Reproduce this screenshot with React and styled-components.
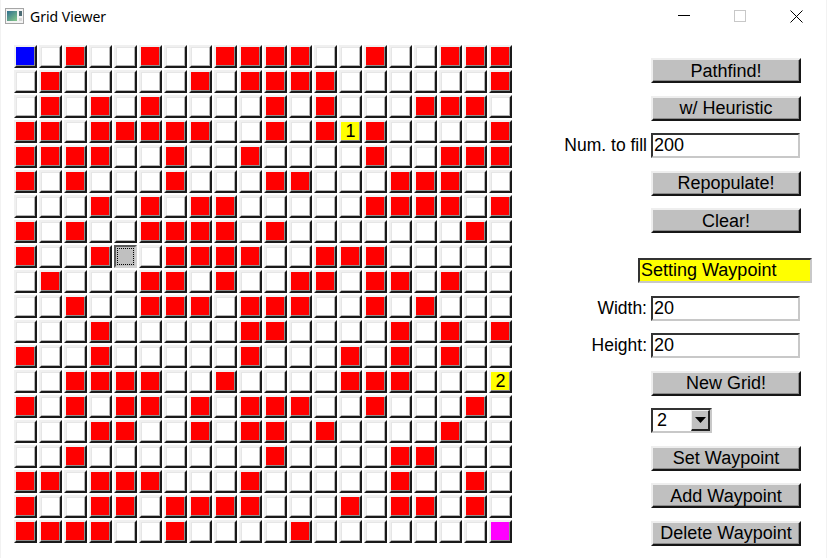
import React from "react";
import styled, { createGlobalStyle, css } from "styled-components";

const Global = createGlobalStyle`
  html, body { margin: 0; padding: 0; background: #fff; }
  body { width: 827px; height: 558px; overflow: hidden; }
`;

const Window = styled.div`
  box-sizing: border-box;
  width: 827px;
  height: 558px;
  background: #fff;
  border-left: 1px solid #f2f2f2;
  border-right: 1px solid #f2f2f2;
  display: flex;
  flex-direction: column;
  font-family: "Liberation Sans", Arial, sans-serif;
  color: #000;
`;

const TitleBar = styled.header`
  height: 45px;
  flex: none;
  display: flex;
  align-items: flex-start;
  padding: 8px 0 0 4px;
  box-sizing: border-box;
`;

const TitleText = styled.span`
  font-family: "Noto Sans", "Open Sans", sans-serif;
  font-size: 14px;
  line-height: 18px;
  margin-left: 6px;
  flex: 1;
`;

const WindowButtons = styled.div`
  display: flex;
  padding-right: 23px;
  gap: 44px;
  margin-top: 2px;
`;

const Body = styled.main`
  display: flex;
  align-items: flex-start;
`;

const Grid = styled.div`
  display: grid;
  grid-template-columns: repeat(20, 23px);
  grid-auto-rows: 23px;
  gap: 2px;
  margin-left: 13px;
`;

const fills = { R: "#ff0000", B: "#0000ff", M: "#ff00ff", Y: "#ffff00", ".": "#ffffff", G: "#c0c0c0" };

const Cell = styled.div`
  box-sizing: border-box;
  width: 23px;
  height: 23px;
  background: ${(p) => fills[p.$kind]};
  border-style: solid;
  border-width: 2px;
  font-size: 18px;
  line-height: 19px;
  text-align: center;
  ${(p) =>
    p.$kind === "G"
      ? css`
          border-color: #5a5a5a #d0d0d0 #d0d0d0 #5a5a5a;
          outline: 1px dotted #000;
          outline-offset: -4px;
        `
      : css`
          border-color: #f0f0f0 #1a1a1a #1a1a1a #f0f0f0;
          box-shadow: inset -1px -1px 0 ${p.$kind === "." ? "#b4b4b4" : "#8c8c8c"}
            ${p.$kind === "." ? ", inset 1px 1px 0 #e6e6e6" : ""};
        `}
`;

const Panel = styled.aside`
  display: flex;
  flex-direction: column;
  gap: 25px;
  margin-left: 51px;
  margin-top: 13px;
`;

const Section = styled.section`
  display: grid;
  grid-template-columns: 84px 150px;
  column-gap: 4px;
  row-gap: 12.5px;
  grid-auto-rows: 25px;
  font-size: 17.5px;
  align-items: center;
`;

const Button = styled.button`
  grid-column: 2;
  box-sizing: border-box;
  width: 150px;
  height: 25px;
  padding: 0;
  background: #c0c0c0;
  border-style: solid;
  border-width: 2px;
  border-color: #eeeeee #161616 #161616 #eeeeee;
  box-shadow: inset -1px -1px 0 #8a8a8a;
  border-radius: 0;
  font: 18px/20px "Liberation Sans", Arial, sans-serif;
  color: #000;
  white-space: nowrap;
`;

const Label = styled.label`
  grid-column: 1;
  justify-self: end;
  white-space: nowrap;
  line-height: 25px;
`;

const Field = styled.input`
  grid-column: 2;
  box-sizing: border-box;
  width: 149px;
  height: 25px;
  padding: 0 0 0 1px;
  background: #fff;
  border-style: solid;
  border-width: 2px;
  border-color: #333 #c8c8c8 #c8c8c8 #333;
  border-radius: 0;
  outline: none;
  font: 18px "Liberation Sans", Arial, sans-serif;
  color: #000;
`;

const Status = styled(Field)`
  grid-column: 1 / -1;
  justify-self: end;
  width: 174px;
  margin-right: -11px;
  background: #ffff00;
`;

const Picker = styled.div`
  grid-column: 2;
  box-sizing: border-box;
  width: 61px;
  height: 25px;
  display: flex;
  align-items: center;
  justify-content: space-between;
  background: #fff;
  border-style: solid;
  border-width: 2px;
  border-color: #333 #c8c8c8 #c8c8c8 #333;
  padding-left: 4px;
  font-size: 18px;
`;

const PickerArrow = styled.span`
  box-sizing: border-box;
  width: 19px;
  height: 21px;
  display: flex;
  align-items: center;
  justify-content: center;
  background: #c0c0c0;
  border-style: solid;
  border-width: 1px 2px 2px 1px;
  border-color: #eee #222 #222 #eee;
`;

const rows = [
  "B.R..R..RRRR..R..RRR",
  ".R.....R.RRRR......R",
  ".R.R.R....R.R...RRR.",
  "RR.RRRRR..R.R1R....R",
  "RRRR..R..R....R..RRR",
  "R.R...R...RR...RRR..",
  "...R.R.RR.....RRRR.R",
  "R.R..RRRR.R.......R.",
  "R..RG.RRRR..RRR.....",
  ".R...RR.R..RR.RR.R..",
  "..R..RRR.RRR..R.R...",
  "...R.....RR....R.R.R",
  "R..R.....R...R.R.R..",
  "..RRRR..R....RRR...2",
  "R.R.RR.R.RRR..R...R.",
  "...RR..R.RR.R....R..",
  "..R.......R....RR...",
  "RR.RRR...R.....R..R.",
  "R..RR.RRRR...R.RR.R.",
  "RRRR..R....R.......M",
];

const AppIcon = () => (
  <svg width="19" height="16" viewBox="0 0 19 16">
    <defs>
      <linearGradient id="ic" x1="0" y1="0" x2="0.8" y2="1">
        <stop offset="0" stopColor="#2e6f8e" />
        <stop offset="1" stopColor="#7fc08a" />
      </linearGradient>
    </defs>
    <rect x="0.5" y="0.5" width="18" height="15" fill="#f4f4f4" stroke="#a6a6a6" />
    <rect x="2" y="3" width="10" height="10" fill="url(#ic)" />
    <rect x="14" y="3" width="3" height="5" fill="#4b6b74" />
    <rect x="14" y="10" width="3" height="3" fill="#d8d8d8" />
  </svg>
);

const Minimize = () => (
  <svg width="12" height="12" viewBox="0 0 12 12">
    <path d="M0 5.5H12" stroke="#000" />
  </svg>
);
const Maximize = () => (
  <svg width="12" height="12" viewBox="0 0 12 12">
    <rect x="0.5" y="0.5" width="11" height="11" fill="none" stroke="#c8c8c8" />
  </svg>
);
const Close = () => (
  <svg width="13" height="13" viewBox="0 0 13 13">
    <path d="M0.5 0.5L12.5 12.5M12.5 0.5L0.5 12.5" stroke="#000" />
  </svg>
);
const Arrow = () => (
  <svg width="11" height="6" viewBox="0 0 11 6">
    <path d="M0 0H11L5.5 6Z" fill="#000" />
  </svg>
);

export default function App() {
  return (
    <Window>
      <Global />
      <TitleBar>
        <AppIcon />
        <TitleText>Grid Viewer</TitleText>
        <WindowButtons>
          <Minimize />
          <Maximize />
          <Close />
        </WindowButtons>
      </TitleBar>
      <Body>
        <Grid>
          {rows.flatMap((row, y) =>
            row.split("").map((c, x) => {
              const num = c === "1" || c === "2";
              return (
                <Cell key={`${x}-${y}`} $kind={num ? "Y" : c}>
                  {num ? c : null}
                </Cell>
              );
            })
          )}
        </Grid>
        <Panel>
          <Section>
            <Button>Pathfind!</Button>
            <Button>w/ Heuristic</Button>
            <Label>Num. to fill</Label>
            <Field readOnly value="200" />
            <Button>Repopulate!</Button>
            <Button>Clear!</Button>
          </Section>
          <Section>
            <Status readOnly value="Setting Waypoint" />
            <Label>Width:</Label>
            <Field readOnly value="20" />
            <Label>Height:</Label>
            <Field readOnly value="20" />
            <Button>New Grid!</Button>
            <Picker>
              2
              <PickerArrow>
                <Arrow />
              </PickerArrow>
            </Picker>
            <Button>Set Waypoint</Button>
            <Button>Add Waypoint</Button>
            <Button>Delete Waypoint</Button>
          </Section>
        </Panel>
      </Body>
    </Window>
  );
}
